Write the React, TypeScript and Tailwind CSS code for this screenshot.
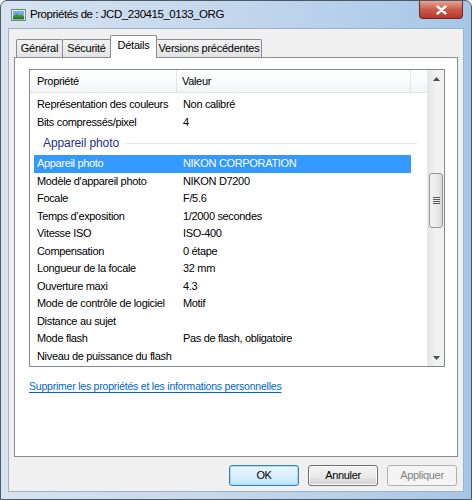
import React from "react";

const rows: [string, string][] = [
  ["Modèle d'appareil photo", "NIKON D7200"],
  ["Focale", "F/5.6"],
  ["Temps d’exposition", "1/2000 secondes"],
  ["Vitesse ISO", "ISO-400"],
  ["Compensation", "0 étape"],
  ["Longueur de la focale", "32 mm"],
  ["Ouverture maxi", "4.3"],
  ["Mode de contrôle de logiciel", "Motif"],
  ["Distance au sujet", ""],
  ["Mode flash", "Pas de flash, obligatoire"],
  ["Niveau de puissance du flash", ""],
];

const tabs = [
  { label: "Général", w: "w-[47px]" },
  { label: "Sécurité", w: "w-[49px]" },
  { label: "Détails", w: "w-[47px]", active: true },
  { label: "Versions précédentes", w: "w-[106px]" },
];

function PictureIcon() {
  return (
    <svg width="15" height="12" viewBox="0 0 16 13">
      <rect x="0.5" y="0.5" width="15" height="12" fill="#f4f4f4" stroke="#6d7a87" />
      <rect x="2" y="2" width="12" height="9" fill="#6fb0e0" />
      <path d="M2 8 L6 5 L9 7 L11 6 L14 8 L14 11 L2 11 Z" fill="#3f8f3a" />
      <path d="M2 9.5 L14 9 L14 11 L2 11 Z" fill="#2f6f2a" />
    </svg>
  );
}

function Row({ label, value, selected }: { label: string; value: string; selected?: boolean }) {
  return (
    <div
      className={`flex items-center h-[17.5px] ml-[4px] w-[377px] pl-[3px] whitespace-nowrap ${
        selected ? "bg-[#3399ff] text-white" : "text-black"
      }`}
    >
      <span className="w-[146px] shrink-0">{label}</span>
      <span>{value}</span>
    </div>
  );
}

function ScrollArrow({ up }: { up?: boolean }) {
  return (
    <div className="h-[17px] flex items-center justify-center">
      <svg width="7" height="4" viewBox="0 0 7 4">
        <path d={up ? "M0 4 L3.5 0 L7 4 Z" : "M0 0 L3.5 4 L7 0 Z"} fill="#4d4d4d" />
      </svg>
    </div>
  );
}

function Btn({ label, kind }: { label: string; kind: "default" | "normal" | "disabled" }) {
  const cls =
    kind === "default"
      ? "border-[#3c7fb1] bg-gradient-to-b from-[#eaf6fd] via-[#d9f0fc] to-[#bee6fd] shadow-[inset_0_0_0_1px_#a8dcf7] text-black"
      : kind === "normal"
      ? "border-[#707070] bg-gradient-to-b from-[#f2f2f2] via-[#ebebeb] to-[#cfcfcf] shadow-[inset_0_0_0_1px_#fcfcfc] text-black"
      : "border-[#adb2b5] bg-[#f4f4f4] text-[#838383]";
  return (
    <div className={`w-[70px] h-[21px] rounded-[3px] border flex items-center justify-center ${cls}`}>
      {label}
    </div>
  );
}

export default function App() {
  return (
    <div
      className="w-[472px] h-[500px] bg-white overflow-hidden text-[11px] tracking-[-0.33px] leading-none"
      style={{ fontFamily: '"Liberation Sans", Arial, sans-serif' }}
    >
      {/* Window frame */}
      <div className="w-full h-full rounded-t-[7px] border border-[#4a5868] bg-gradient-to-r from-[#d7e3ef] via-[#c3d7ec] to-[#a6c6e8] flex flex-col px-[7px] pb-[7px]">
        {/* Title bar */}
        <div className="h-[27px] flex items-start shrink-0">
          <div className="flex items-center gap-[4px] pl-[3px] pt-[8px]">
            <PictureIcon />
            <span className="text-[11.5px] tracking-[-0.45px] text-black whitespace-nowrap">
              Propriétés de : JCD_230415_0133_ORG
            </span>
          </div>
          <div className="ml-auto mr-[1px] w-[44px] h-[18px] rounded-b-[4px] border border-t-0 border-[#6b2a2a] bg-gradient-to-b from-[#e8a493] via-[#c95b4b] to-[#b8342a] flex items-center justify-center">
            <svg width="11" height="10" viewBox="0 0 11 10">
              <path d="M1.5 1.5 L9.5 8.5 M9.5 1.5 L1.5 8.5" stroke="#ffffff" strokeWidth="2.4" strokeLinecap="round" />
            </svg>
          </div>
        </div>

        {/* Client area */}
        <div className="flex-1 border border-[#9fb3c8] bg-[#f0f0f0] flex flex-col px-[5px] pt-[6px]">
          {/* Tabs */}
          <div className="flex items-end h-[22px] pl-[3px] tracking-[-0.25px]">
            {tabs.map((t) =>
              t.active ? (
                <div
                  key={t.label}
                  className={`${t.w} h-[23px] -ml-px -mb-px relative z-10 bg-white border border-b-0 border-[#898c95] rounded-t-[2px] flex items-center justify-center pb-[3px] whitespace-nowrap`}
                >
                  {t.label}
                </div>
              ) : (
                <div
                  key={t.label}
                  className={`${t.w} h-[18px] -ml-px bg-gradient-to-b from-[#f2f2f2] to-[#e3e3e3] border border-b-0 border-[#898c95] rounded-t-[2px] flex items-center justify-center whitespace-nowrap`}
                >
                  {t.label}
                </div>
              )
            )}
          </div>

          {/* Tab panel */}
          <div className="h-[400px] bg-white border border-[#898c95] flex flex-col pt-[11px] pl-[14px] pr-[12px]">
            {/* List view */}
            <div className="h-[298px] border border-[#828790] flex">
              <div className="flex-1 flex flex-col">
                <div className="h-[23px] flex bg-gradient-to-b from-white to-[#f4f5f7] border-b border-[#e2e3e5]">
                  <div className="w-[147px] border-r border-[#e5e5e5] pl-[7px] flex items-center">Propriété</div>
                  <div className="w-[234px] border-r border-[#e5e5e5] pl-[5px] flex items-center">Valeur</div>
                  <div className="flex-1" />
                </div>
                <div className="pt-[3px] flex flex-col">
                  <Row label="Représentation des couleurs" value="Non calibré" />
                  <Row label="Bits compressés/pixel" value="4" />
                  <div className="h-[24px] flex items-center pl-[13px] pr-[10px] gap-[6px]">
                    <span className="text-[12px] tracking-[-0.1px] text-[#1e3287] whitespace-nowrap">Appareil photo</span>
                    <div className="flex-1 h-px bg-[#e2eaf4]" />
                  </div>
                  <Row label="Appareil photo" value="NIKON CORPORATION" selected />
                  {rows.map(([l, v]) => (
                    <Row key={l} label={l} value={v} />
                  ))}
                </div>
              </div>
              {/* Scrollbar */}
              <div className="w-[17px] bg-gradient-to-r from-[#e6e6e6] via-[#f2f2f2] to-[#f2f2f2] border-l border-[#e8e8e8] flex flex-col">
                <ScrollArrow up />
                <div className="flex-1 flex flex-col px-px">
                  <div className="h-[86px]" />
                  <div className="h-[55px] rounded-[3px] border border-[#979797] bg-gradient-to-r from-[#f3f3f3] via-[#ececec] to-[#d8d8d8] flex flex-col items-center justify-center gap-[1px]">
                    <div className="w-[7px] h-px bg-[#5a5a5a]" />
                    <div className="w-[7px] h-px bg-[#5a5a5a]" />
                    <div className="w-[7px] h-px bg-[#5a5a5a]" />
                    <div className="w-[7px] h-px bg-[#5a5a5a]" />
                  </div>
                </div>
                <ScrollArrow />
              </div>
            </div>

            <div className="mt-[14px]">
              <span className="text-[10.5px] tracking-[-0.22px] text-[#0066cc] underline underline-offset-[2px]">
                Supprimer les propriétés et les informations personnelles
              </span>
            </div>
          </div>

          {/* Buttons */}
          <div className="flex justify-end gap-[9px] pt-[8px] pr-[1px]">
            <Btn label="OK" kind="default" />
            <Btn label="Annuler" kind="normal" />
            <Btn label="Appliquer" kind="disabled" />
          </div>
        </div>
      </div>
    </div>
  );
}
